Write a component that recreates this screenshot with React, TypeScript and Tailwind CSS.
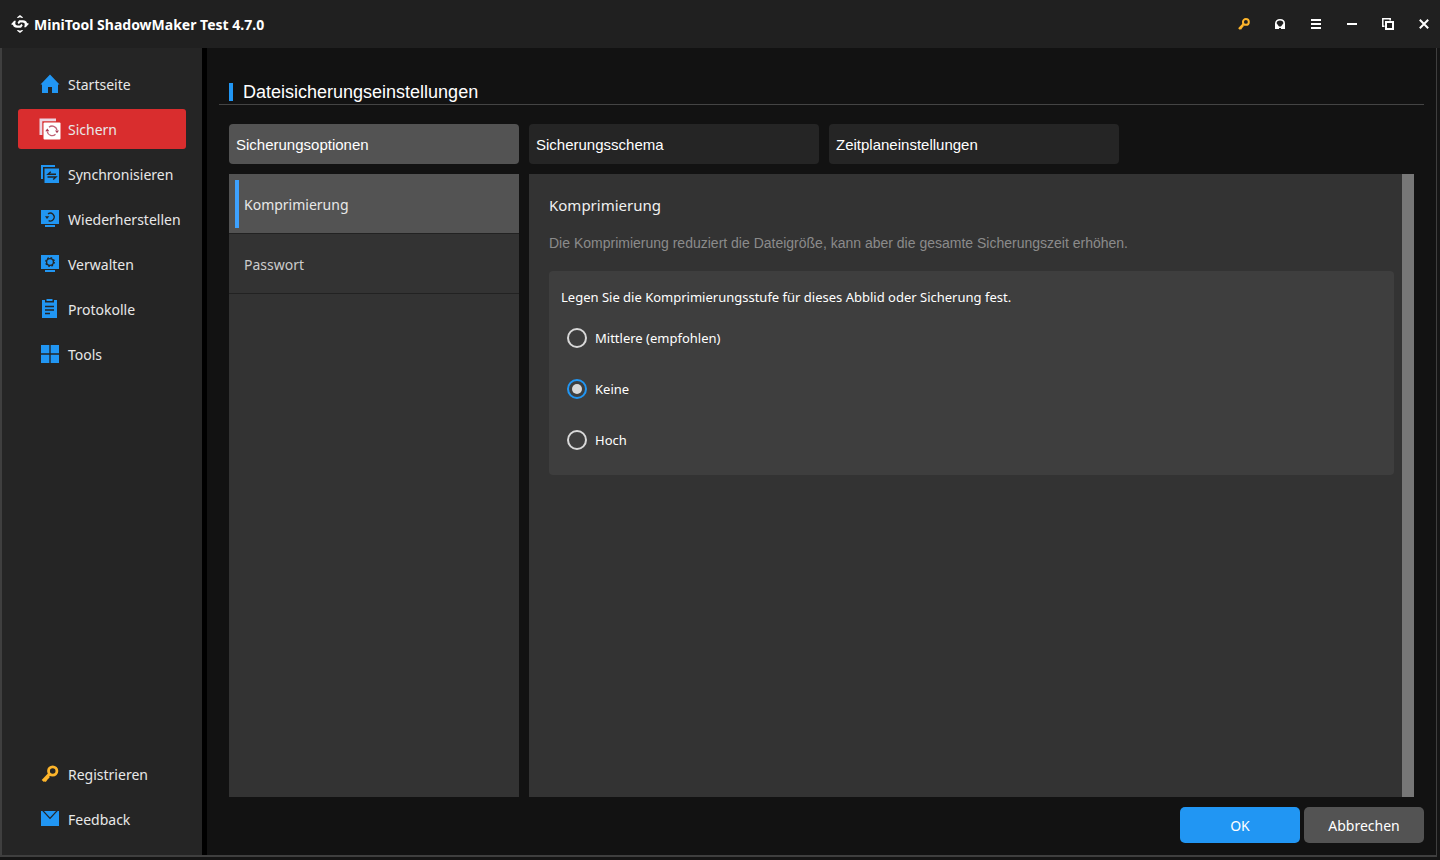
import { useState, type ReactNode } from 'react';
import clsx from 'clsx';

const BLUE = '#2196f3';

function LogoIcon() {
  return (
    <svg width="18" height="18" viewBox="0 0 18 18" fill="none">
      <path d="M5.800 2.600 9 0l3.200 2.600-1.200.5L9 2.300l-2 .8zM5.800 15.400 9 18l3.200-2.600-1.200-.5-2 .8-2-.8z" fill="#fff" />
      <path d="M0 9.200 3.200 5.800h1.600L4.300 8c-.3 1.600.9 2.400 2.200 2.400H9v2.300H6c-2.200 0-3.600-1-4-2.700z" fill="#fff" />
      <path d="M18 8.800 14.800 12.200h-1.600l.5-2.200c.3-1.600-.9-2.400-2.200-2.400H9.200L7.800 9.200 6.600 7.400 8.200 5.300H12c2.200 0 3.600 1 4 2.700z" fill="#fff" />
      <path d="M9 10.400 10.500 8.800l1.200 1.800L10 12.700H9z" fill="#fff" />
    </svg>
  );
}

function KeyIcon({ size }: { size: number }) {
  return (
    <svg width={size} height={size} viewBox="0 0 20 20" fill="none" stroke="#fdb52b">
      <circle cx="12.700" cy="7" r="4.200" strokeWidth="2.800" />
      <path d="M9.500 10 2.800 17M4.500 15.200l2.200 1.600M7 12.600l1.800 1.600" strokeWidth="3.200" />
    </svg>
  );
}

function HomeIcon() {
  return (
    <svg width="20" height="20" viewBox="0 0 20 20" fill={BLUE}>
      <path d="M10 .5 19.500 10.500H18V19h-6v-6H8v6H2v-8.500H.5z" />
    </svg>
  );
}

function BackupIcon() {
  return (
    <svg width="22" height="22" viewBox="0 0 22 22" fill="none">
      <path d="M.5.500h16.500v2.800H3.300V17H.5z" fill="#ecd6e2" />
      <rect x="4.500" y="4.500" width="17" height="17" rx="1" fill="#fff" />
      <path d="M10 9.200A5 5 0 0 1 18 12M16.500 16.300A5 5 0 0 1 8.200 13.500" stroke="#c06478" strokeWidth="1.400" />
      <path d="M6.300 13.200h4L8.300 10.500zM16 12.500h4l-2 2.700z" fill="#a83a54" />
    </svg>
  );
}

function SyncIcon() {
  return (
    <svg width="20" height="20" viewBox="0 0 20 20" fill="none">
      <path d="M1 1h14v2H3v12H1z" fill={BLUE} />
      <path d="M4.500 4.500H19V19H4.500z" fill={BLUE} />
      <path d="M16 10.300H8l2.800-2.600M7.500 13h8.500l-2.800 2.600" stroke="#252525" strokeWidth="1.400" />
    </svg>
  );
}

function RestoreIcon() {
  return (
    <svg width="20" height="20" viewBox="0 0 20 20" fill="none">
      <path d="M1 1h18v14H1zM5 16h10v2H5z" fill={BLUE} />
      <path d="M8 4.900A3.900 3.900 0 1 1 8.600 11.600" stroke="#252525" strokeWidth="1.300" />
      <path d="M5 7.300h4.300L7 10z" fill="#252525" />
    </svg>
  );
}

function ManageIcon() {
  return (
    <svg width="20" height="20" viewBox="0 0 20 20" fill="none">
      <path d="M1 1h18v14H1zM5 16h10v2H5z" fill={BLUE} />
      <circle cx="10" cy="8" r="3.400" stroke="#252525" strokeWidth="1.300" />
      <circle cx="10" cy="8" r="4.300" stroke="#252525" strokeWidth="1.300" strokeDasharray="1.690 1.690" />
    </svg>
  );
}

function LogsIcon() {
  return (
    <svg width="20" height="20" viewBox="0 0 20 20" fill="none">
      <path d="M2 1h3v2.500h9V1h3v18H2z" fill={BLUE} />
      <path d="M6.500 0h6v2h-6z" fill={BLUE} />
      <path d="M5 7.500h9M5 11h9M5 14.500h5" stroke="#252525" strokeWidth="1.300" />
    </svg>
  );
}

function ToolsIcon() {
  return (
    <svg width="20" height="20" viewBox="0 0 20 20" fill={BLUE}>
      <path d="M1 1h8.300v8.300H1zM10.700 1H19v8.300h-8.300zM1 10.700h8.300V19H1zM10.700 10.700H19V19h-8.300z" />
    </svg>
  );
}

function MailIcon() {
  return (
    <svg width="20" height="20" viewBox="0 0 20 20" fill={BLUE}>
      <path d="M4 2h12l-6 6.500z" />
      <path d="M1 2h1.300L10 10.300 17.700 2H19v15H1z" />
    </svg>
  );
}

function HeadsetIcon() {
  return (
    <svg width="10" height="10" viewBox="0 0 10 10" fill="none">
      <path d="M.8 6V4.500C.8 2.200 2.500.8 5 .8s4.200 1.400 4.200 3.700V6" stroke="#fff" strokeWidth="1.600" />
      <path d="M0 4.500h1.800L4 7.500V10H0zM10 4.500H8.200L6 7.500V10h4z" fill="#fff" />
      <path d="M3.500 7.500h3V9h-3z" fill="#fff" />
    </svg>
  );
}

function MenuIcon() {
  return (
    <svg width="10" height="10" viewBox="0 0 10 10" fill="#fff">
      <path d="M0 0h10v2H0zM0 4h10v2H0zM0 8h10v2H0z" />
    </svg>
  );
}

function MinimizeIcon() {
  return (
    <svg width="10" height="10" viewBox="0 0 10 10" fill="#fff">
      <path d="M0 4h10v2H0z" />
    </svg>
  );
}

function RestoreWindowIcon() {
  return (
    <svg width="12" height="12" viewBox="0 0 12 12" fill="none" stroke="#fff">
      <path d="M2.500 8.200H.8V.8h7.400v1.700" strokeWidth="1.500" />
      <path d="M4 4h7v7H4z" strokeWidth="2" />
    </svg>
  );
}

function CloseIcon() {
  return (
    <svg width="10" height="10" viewBox="0 0 10 10" fill="none" stroke="#fff" strokeWidth="2">
      <path d="M.8.8l8.400 8.400M9.200.8.8 9.200" />
    </svg>
  );
}

const windowButtons = [
  { label: 'Registrieren', icon: <KeyIcon size={14} /> },
  { label: 'Support', icon: <HeadsetIcon /> },
  { label: 'Menü', icon: <MenuIcon /> },
  { label: 'Minimieren', icon: <MinimizeIcon /> },
  { label: 'Verkleinern', icon: <RestoreWindowIcon /> },
  { label: 'Schließen', icon: <CloseIcon /> },
];

const mainNav = [
  { label: 'Startseite', icon: <HomeIcon /> },
  { label: 'Sichern', icon: <BackupIcon />, active: true },
  { label: 'Synchronisieren', icon: <SyncIcon /> },
  { label: 'Wiederherstellen', icon: <RestoreIcon /> },
  { label: 'Verwalten', icon: <ManageIcon /> },
  { label: 'Protokolle', icon: <LogsIcon /> },
  { label: 'Tools', icon: <ToolsIcon /> },
];

const footerNav = [
  { label: 'Registrieren', icon: <KeyIcon size={20} /> },
  { label: 'Feedback', icon: <MailIcon /> },
];

const tabs = ['Sicherungsoptionen', 'Sicherungsschema', 'Zeitplaneinstellungen'];
const sections = ['Komprimierung', 'Passwort'];
const levels = ['Mittlere (empfohlen)', 'Keine', 'Hoch'];

function NavItem({ label, icon, active }: { label: string; icon: ReactNode; active?: boolean }) {
  return (
    <button
      type="button"
      className={clsx(
        'flex h-10 w-full items-center gap-2 rounded-[3px] pl-[22px] text-left text-[14px] text-[#e8e8e8]',
        active && 'bg-[#d92d2e]'
      )}
    >
      <span className="flex h-5 w-5 shrink-0 items-center justify-center [&>svg]:shrink-0">{icon}</span>
      <span className="whitespace-nowrap">{label}</span>
    </button>
  );
}

export default function App() {
  const [tab, setTab] = useState(tabs[0]);
  const [section, setSection] = useState(sections[0]);
  const [level, setLevel] = useState('Keine');

  return (
    <div className="flex h-screen flex-col bg-[#151515] font-['Noto_Sans',sans-serif] text-white">
      {/* Title bar */}
      <header className="flex h-12 shrink-0 items-center justify-between bg-[#202020] pr-1 pl-[11px]">
        <div className="flex items-center gap-[5px]">
          <LogoIcon />
          <h1 className="text-[14px] font-bold">MiniTool ShadowMaker Test 4.7.0</h1>
        </div>
        <div className="flex gap-3">
          {windowButtons.map((b) => (
            <button key={b.label} type="button" aria-label={b.label} className="flex h-6 w-6 items-center justify-center">
              {b.icon}
            </button>
          ))}
        </div>
      </header>

      <div className="mr-[3px] mb-[3px] flex min-h-0 flex-1 border-r border-b-2 border-l-2 border-[#3f3f3f]">
        {/* Sidebar */}
        <nav className="flex w-[205px] shrink-0 flex-col justify-between border-r-[5px] border-black bg-[#252525] px-4 py-4">
          <div className="flex flex-col gap-[5px]">
            {mainNav.map((item) => (
              <NavItem key={item.label} {...item} />
            ))}
          </div>
          <div className="flex flex-col gap-[5px]">
            {footerNav.map((item) => (
              <NavItem key={item.label} {...item} />
            ))}
          </div>
        </nav>

        <main className="flex min-w-0 flex-1 flex-col bg-[#121212] px-3 pt-8 pb-3">
          <div className="flex h-[25px] shrink-0 items-center gap-[10px] border-b border-[#444] pl-[10px]">
            <span className="h-[18px] w-1 bg-[#2196f3]" />
            <h2 className="font-['Liberation_Sans',sans-serif] text-[18px] leading-6">Dateisicherungseinstellungen</h2>
          </div>

          <div className="mt-[19px] flex shrink-0 gap-[10px] px-[10px]">
            {tabs.map((t) => (
              <button
                key={t}
                type="button"
                onClick={() => setTab(t)}
                className={clsx(
                  "h-10 w-[290px] rounded-[4px] pt-0.5 pl-[7px] text-left font-['Liberation_Sans',sans-serif] text-[15px]",
                  t === tab ? 'bg-[#535353]' : 'bg-[#252525]'
                )}
              >
                {t}
              </button>
            ))}
          </div>

          <div className="mt-[10px] flex min-h-0 flex-1 gap-[10px] px-[10px]">
            {/* Section list */}
            <div className="w-[290px] shrink-0 bg-[#333]">
              {sections.map((s) => (
                <button
                  key={s}
                  type="button"
                  onClick={() => setSection(s)}
                  className={clsx(
                    'flex h-[60px] w-full items-center gap-[5px] border-b border-[#222] pl-[6px] text-left text-[14px]',
                    s === section ? 'bg-[#535353] text-[#e8e8e8]' : 'text-[#ccc]'
                  )}
                >
                  <span className={clsx('h-12 w-1', s === section && 'bg-[#3ea2ff]')} />
                  <span className="pt-0.5">{s}</span>
                </button>
              ))}
            </div>

            {/* Section content */}
            <div className="flex min-w-0 flex-1 bg-[#333]">
              <div className="min-w-0 flex-1 py-5 pr-2 pl-5">
                <h3 className="text-[15px] leading-[22px] text-[#f0f0f0]">Komprimierung</h3>
                <p className="mt-[17px] font-['Liberation_Sans',sans-serif] text-[14px] leading-5 text-[#8b8b8b]">
                  Die Komprimierung reduziert die Dateigröße, kann aber die gesamte Sicherungszeit erhöhen.
                </p>
                <fieldset className="mt-[18px] rounded-[4px] bg-[#3e3e3e] px-3 pt-4 pb-[25px]">
                  <legend className="float-left w-full text-[13px] leading-5">
                    Legen Sie die Komprimierungsstufe für dieses Abblid oder Sicherung fest.
                  </legend>
                  <div className="clear-both flex flex-col items-start gap-[31px] pt-[21px] pl-[6px]">
                    {levels.map((l) => (
                      <label key={l} className="flex items-center gap-2 text-[13px] leading-5">
                        <input
                          type="radio"
                          name="level"
                          checked={l === level}
                          onChange={() => setLevel(l)}
                          className="h-5 w-5 appearance-none rounded-full border-2 border-[#d8d8d8] p-[3px] checked:border-[#2196f3] checked:bg-[#d8d8d8] checked:bg-clip-content"
                        />
                        {l}
                      </label>
                    ))}
                  </div>
                </fieldset>
              </div>
              <div className="w-3 shrink-0 bg-[#777]" />
            </div>
          </div>

          <div className="mt-[10px] flex shrink-0 justify-end gap-1">
            <button type="button" className="h-9 w-[120px] rounded-[5px] bg-[#2196f3] text-[14px]">
              OK
            </button>
            <button type="button" className="h-9 w-[120px] rounded-[5px] bg-[#535353] text-[14px]">
              Abbrechen
            </button>
          </div>
        </main>
      </div>
    </div>
  );
}
